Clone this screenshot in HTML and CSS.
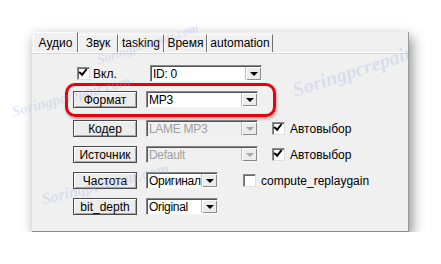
FILE: index.html
```html
<!DOCTYPE html>
<html lang="ru">
<head>
    <meta charset="UTF-8">
    <title>Аудио</title>
    <link rel="stylesheet" href="styles.css">
</head>
<body>
    <div class="window">
        <div class="tabs">
            <div class="tab active t-audio">Аудио</div>
            <div class="tab t-sound">Звук</div>
            <div class="tab t-tasking">tasking</div>
            <div class="tab t-time">Время</div>
            <div class="tab t-auto">automation</div>
        </div>

        <div class="page">
            <div class="row">
                <label class="cell check first">
                    <span class="box checked"></span>Вкл.
                </label>
                <div class="combo wide"><span class="value">ID: 0</span><span class="arrow"></span></div>
            </div>

            <div class="row">
                <div class="cell"><button class="btn">Формат</button></div>
                <div class="combo wide"><span class="value">MP3</span><span class="arrow"></span></div>
            </div>

            <div class="row spaced">
                <div class="cell"><button class="btn">Кодер</button></div>
                <div class="combo wide disabled"><span class="value">LAME MP3</span><span class="arrow"></span></div>
                <label class="check auto"><span class="box checked"></span>Автовыбор</label>
            </div>

            <div class="row">
                <div class="cell"><button class="btn">Источник</button></div>
                <div class="combo wide disabled"><span class="value">Default</span><span class="arrow"></span></div>
                <label class="check auto"><span class="box checked"></span>Автовыбор</label>
            </div>

            <div class="row">
                <div class="cell"><button class="btn">Частота</button></div>
                <div class="combo short"><span class="value">Оригинал</span><span class="arrow"></span></div>
                <label class="check gain"><span class="box"></span>compute_replaygain</label>
            </div>

            <div class="row">
                <div class="cell"><button class="btn">bit_depth</button></div>
                <div class="combo short"><span class="value">Original</span><span class="arrow"></span></div>
            </div>
        </div>

        <div class="highlight"></div>
    </div>

    <!-- водяные знаки -->
    <span class="mark m1">Soringpcrepair.com</span>
    <span class="mark m2">Soringpcrepair.com</span>
    <span class="mark m3">Soringpcrepair</span>
    <span class="mark m4">Soringpcrepair.com</span>
</body>
</html>
```

FILE: styles.css
```css
body {
    margin: 0;
    background: #fff;
    font-family: 'Liberation Sans', Arial, sans-serif;
    font-size: 12px;
    color: #000;
    overflow: hidden;
}

.window {
    position: relative;
    margin: 32px 0 0 32px;
    width: 377px;
    height: 200px;
    box-sizing: border-box;
    background: #f0f0f0;
    border-right: 1px solid #9a9a9a;
    border-bottom: 1px solid #8a8a8a;
    box-shadow: 3px 5px 12px rgba(0, 0, 0, 0.45);
}

/* вкладки */
.tabs {
    display: flex;
    align-items: flex-end;
    height: 20px;
    padding-left: 1px;
    border-bottom: 1px solid #fff;
    box-shadow: 0 1px 0 #d8d8d8;
}

.tab {
    height: 18px;
    line-height: 17px;
    text-align: center;
    border-top: 1px solid #fff;
    border-left: 1px solid #fff;
    border-right: 1px solid #707070;
    box-sizing: border-box;
}

.tab.active {
    height: 20px;
    line-height: 20px;
}

.t-audio { width: 45px; }
.t-sound { width: 40px; }
.t-tasking { width: 46px; }
.t-time { width: 43px; }
.t-auto { width: 66px; }

/* содержимое */
.page {
    display: flex;
    flex-direction: column;
    gap: 9px;
    padding: 12px 0 0 41px;
}

.row {
    display: flex;
    align-items: center;
    height: 17px;
}

.row.spaced {
    margin-top: 3px;
}

.cell {
    width: 64px;
    margin-right: 9px;
    display: flex;
    align-items: center;
}

.btn {
    width: 64px;
    height: 17px;
    padding: 0;
    font-family: inherit;
    font-size: 12px;
    line-height: 14px;
    color: #000;
    background: #ececec;
    border: 1px solid #4a4a4a;
    box-shadow: inset 1px 1px 0 #fff, inset -1px -1px 0 #a8a8a8;
}

.check {
    display: flex;
    align-items: center;
    gap: 5px;
}

.check.first {
    padding-left: 4px;
    gap: 3px;
}

.box {
    width: 13px;
    height: 13px;
    box-sizing: border-box;
    background: #fff;
    border: 1px solid #8a8a8a;
    border-right-color: #e0e0e0;
    border-bottom-color: #e0e0e0;
    box-shadow: inset 1px 1px 0 #6a6a6a;
    position: relative;
}

.box.checked::after {
    content: '';
    position: absolute;
    left: 2px;
    top: 1px;
    width: 6px;
    height: 3px;
    border-left: 2px solid #000;
    border-bottom: 2px solid #000;
    transform: rotate(-50deg);
    transform-origin: 40% 70%;
}

.check.auto {
    margin-left: 14px;
}

.check.gain {
    margin-left: 25px;
}

.combo {
    display: flex;
    height: 17px;
    box-sizing: border-box;
    background: #fff;
    border: 1px solid #888;
    border-right-color: #f4f4f4;
    border-bottom-color: #f4f4f4;
    box-shadow: inset 1px 1px 0 #555;
}

.combo.wide {
    width: 112px;
}

.combo.short {
    width: 72px;
}

.value {
    flex: 1;
    padding: 1px 0 0 2px;
    font-size: 12px;
    letter-spacing: -0.3px;
    line-height: 14px;
    white-space: nowrap;
    overflow: hidden;
}

.arrow {
    width: 16px;
    flex-shrink: 0;
    margin: 1px 0;
    box-sizing: border-box;
    background: #ececec;
    border-left: 1px solid #bdbdbd;
    box-shadow: inset 1px 1px 0 #fff, inset -1px -1px 0 #8a8a8a;
    position: relative;
}

.arrow::after {
    content: '';
    position: absolute;
    left: 4px;
    top: 5px;
    border-left: 4px solid transparent;
    border-right: 4px solid transparent;
    border-top: 4px solid #000;
}

.combo.disabled {
    background: #f0f0f0;
    color: #a0a0a0;
}

.combo.disabled .arrow::after {
    border-top-color: #a6a6a6;
}

/* красная рамка вокруг "Формат" */
.highlight {
    position: absolute;
    left: 33px;
    top: 51px;
    width: 211px;
    height: 34px;
    box-sizing: border-box;
    border: 3px solid #e8000b;
    border-radius: 10px;
    box-shadow: 1px 2px 3px rgba(0, 0, 0, 0.3);
}

.mark {
    position: absolute;
    font-family: 'Liberation Serif', serif;
    font-style: italic;
    font-weight: bold;
    color: rgba(160, 170, 225, 0.28);
    white-space: nowrap;
    pointer-events: none;
}

.m1 { left: 95px; top: 36px; font-size: 13px; transform: rotate(-18deg); }
.m2 { left: 10px; top: 88px; font-size: 15px; transform: rotate(-15deg); }
.m3 { left: 290px; top: 60px; font-size: 20px; transform: rotate(-18deg); }
.m4 { left: 40px; top: 175px; font-size: 16px; transform: rotate(-14deg); }
```
